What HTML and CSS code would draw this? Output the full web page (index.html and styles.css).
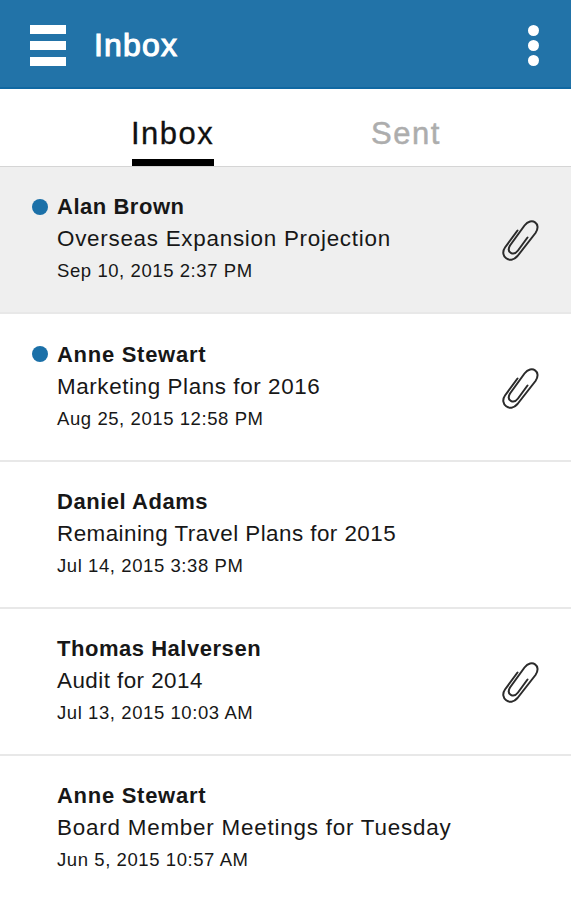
FILE: index.html
```html
<!DOCTYPE html>
<html lang="en">
<head>
<meta charset="utf-8">
<title>Inbox</title>
<link rel="stylesheet" href="styles.css">
</head>
<body>
<svg class="defs" aria-hidden="true">
  <symbol id="clip" viewBox="0 0 46 50">
    <path d="M20.5 15.5 L8 32.500 C2 41 13 50 20.500 41 L38.500 18 C45 8.500 34.500 1.500 27.500 10.500 L13 30.500 C9 37.500 16.500 41.500 21 35.500 L30.500 22.500"/>
  </symbol>
</svg>
<header class="bar">
  <div class="menu"><i></i><i></i><i></i></div>
  <h1 class="title">Inbox</h1>
  <div class="more"><i></i><i></i><i></i></div>
</header>
<nav class="tabs">
  <a class="tab active">Inbox</a>
  <a class="tab sent">Sent</a>
</nav>
<main class="list">
  <article class="mail selected unread">
    <div class="text"><h2 class="name">Alan Brown</h2><p class="subject wide">Overseas Expansion Projection</p><p class="date">Sep 10, 2015 2:37 PM</p></div>
    <svg class="clip"><use href="#clip"/></svg>
  </article>
  <article class="mail unread">
    <div class="text"><h2 class="name loose">Anne Stewart</h2><p class="subject">Marketing Plans for 2016</p><p class="date">Aug 25, 2015 12:58 PM</p></div>
    <svg class="clip"><use href="#clip"/></svg>
  </article>
  <article class="mail">
    <div class="text"><h2 class="name">Daniel Adams</h2><p class="subject tight">Remaining Travel Plans for 2015</p><p class="date">Jul 14, 2015 3:38 PM</p></div>
  </article>
  <article class="mail">
    <div class="text"><h2 class="name">Thomas Halversen</h2><p class="subject tight">Audit for 2014</p><p class="date">Jul 13, 2015 10:03 AM</p></div>
    <svg class="clip"><use href="#clip"/></svg>
  </article>
  <article class="mail">
    <div class="text"><h2 class="name loose">Anne Stewart</h2><p class="subject wider">Board Member Meetings for Tuesday</p><p class="date">Jun 5, 2015 10:57 AM</p></div>
  </article>
</main>
</body>
</html>
```
FILE: styles.css
```css
* { box-sizing: border-box; margin: 0; padding: 0; }
body { background: #fff; color: #171717; font-family: "Liberation Sans", Arial, sans-serif; height: 900px; overflow: hidden; }
.defs { display: none; }
.bar { height: 89px; background: #2273a8; border-bottom: 2px solid #1068a2; display: flex; align-items: center; padding: 3px 32px 0 30px; }
.menu { width: 36px; display: flex; flex-direction: column; gap: 7px; }
.menu i { height: 9px; background: #fff; }
.title { margin: 0 0 0 28px; color: #fff; font-size: 32px; line-height: 36px; font-weight: 400; letter-spacing: 1.2px; -webkit-text-stroke: 1.1px #fff; }
.more { margin-left: auto; display: flex; flex-direction: column; gap: 4px; }
.more i { width: 11px; height: 11px; border-radius: 50%; background: #fff; }
.tabs { height: 78px; display: flex; border-bottom: 1px solid #d5d5d5; padding-left: 132px; }
.tab { height: 77px; padding-top: 28px; font-size: 31px; line-height: 34px; letter-spacing: 1.5px; white-space: nowrap; }
.active { width: 82px; color: #111; border-bottom: 7px solid #000; -webkit-text-stroke: .3px #111; text-indent: -1px; }
.sent { margin-left: 157px; color: #adadad; -webkit-text-stroke: .5px #adadad; }
.mail { height: 147.3px; display: flex; align-items: flex-start; padding: 27.3px 28px 0 57px; border-bottom: 2px solid #e8e8e8; position: relative; }
.mail:last-child { border-bottom: 0; }
.selected { background: #efefef; }
.unread::before { content: ""; position: absolute; left: 32px; top: 32px; width: 16px; height: 16px; border-radius: 50%; background: #1b70a8; }
.text { flex: 1; }
.name { font-size: 22px; line-height: 26px; font-weight: 700; letter-spacing: .53px; }
.loose { letter-spacing: .72px; }
.subject { margin-top: 6px; font-size: 22.4px; line-height: 26px; letter-spacing: .6px; }
.wide { letter-spacing: .74px; }
.wider { letter-spacing: .79px; }
.tight { letter-spacing: .46px; }
.date { margin-top: 8px; font-size: 18.5px; line-height: 22px; letter-spacing: .58px; }
.clip { width: 46px; height: 50px; margin-top: 21px; fill: none; stroke: #2b2b2b; stroke-width: 2; stroke-linecap: round; stroke-linejoin: round; }
```
